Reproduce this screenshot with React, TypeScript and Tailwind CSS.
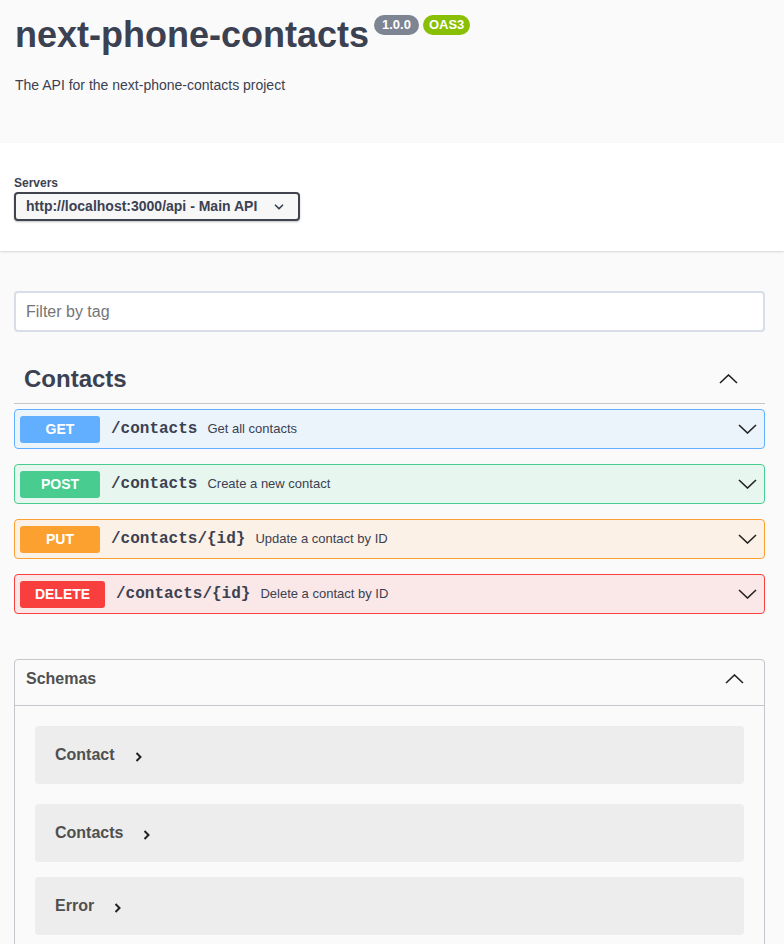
import { ChevronDown } from "lucide-react";

type Op = {
  method: string;
  path: string;
  summary: string;
  badge: string;
  border: string;
  bg: string;
  width: string;
};

const ops: Op[] = [
  { method: "GET", path: "/contacts", summary: "Get all contacts", badge: "bg-[#61affe]", border: "border-[#61affe]", bg: "bg-[#ebf3fb]", width: "w-[80px]" },
  { method: "POST", path: "/contacts", summary: "Create a new contact", badge: "bg-[#49cc90]", border: "border-[#49cc90]", bg: "bg-[#e8f6f0]", width: "w-[80px]" },
  { method: "PUT", path: "/contacts/{id}", summary: "Update a contact by ID", badge: "bg-[#fca130]", border: "border-[#fca130]", bg: "bg-[#fbf1e6]", width: "w-[80px]" },
  { method: "DELETE", path: "/contacts/{id}", summary: "Delete a contact by ID", badge: "bg-[#f93e3e]", border: "border-[#f93e3e]", bg: "bg-[#fae7e7]", width: "w-[85px]" },
];

const schemas = [
  { name: "Contact", mb: "mb-5" },
  { name: "Contacts", mb: "mb-[15px]" },
  { name: "Error", mb: "mb-[15px]" },
];

// swagger-style wide arrows
function ArrowDown() {
  return (
    <svg width="19" height="10" viewBox="0 0 19 10" className="ml-auto shrink-0">
      <polyline points="1,1 9.5,9 18,1" fill="none" stroke="#222" strokeWidth="1.6" />
    </svg>
  );
}

function ArrowUp() {
  return (
    <svg width="19" height="10" viewBox="0 0 19 10" className="ml-auto shrink-0">
      <polyline points="1,9 9.5,1 18,9" fill="none" stroke="#222" strokeWidth="1.6" />
    </svg>
  );
}

function ArrowRight() {
  return (
    <svg width="7" height="10" viewBox="0 0 7 10" className="ml-5 mt-[3px] shrink-0">
      <polyline points="1.5,1 5.5,5 1.5,9" fill="none" stroke="#222" strokeWidth="2" />
    </svg>
  );
}

function OpBlock({ op }: { op: Op }) {
  return (
    <div className={`mb-[15px] flex h-[40px] items-center rounded border ${op.border} ${op.bg} pl-[5px] pr-[7px]`}>
      <span className={`flex h-[27px] ${op.width} items-center justify-center rounded-[3px] ${op.badge} text-[14px] font-bold text-white`}>
        {op.method}
      </span>
      <span className="ml-[11px] font-['Liberation_Mono',monospace] text-[16px] font-semibold text-[#3b4151]">{op.path}</span>
      <span className="ml-[10px] text-[13px] text-[#3b4151]">{op.summary}</span>
      <ArrowDown />
    </div>
  );
}

export default function App() {
  return (
    <div className="min-h-[944px] bg-[#fafafa] font-['Liberation_Sans',Arial,sans-serif] text-[#3b4151]">
      <div className="h-[143px] pl-[15px] pt-[13px]">
        <div className="flex items-start">
          <h2 className="text-[36px] font-bold leading-[44px] text-[#3b4151]">next-phone-contacts</h2>
          <span className="ml-[5px] mt-[2px] flex h-[20px] items-center rounded-full bg-[#7d8492] px-[8px] text-[13px] font-bold text-white">1.0.0</span>
          <span className="ml-[4px] mt-[2px] flex h-[20px] items-center rounded-full bg-[#89bf04] px-[6px] text-[13px] font-bold text-white">OAS3</span>
        </div>
        <p className="mt-[18px] text-[14px]">The API for the next-phone-contacts project</p>
      </div>

      <div className="h-[108px] bg-white pl-[14px] pt-[33px] shadow-[0_1px_2px_0_rgba(0,0,0,0.15)]">
        <div className="text-[12px] font-bold leading-[15px]">Servers</div>
        <div className="mt-[1px] flex h-[29px] w-[286px] items-center rounded border-2 border-[#41444e] bg-[#f7f7f7] pl-[10px] pr-[12px] shadow-[0_1px_2px_0_rgba(0,0,0,0.25)]">
          <span className="text-[14px] font-bold">http://localhost:3000/api - Main API</span>
          <ChevronDown className="ml-auto h-[14px] w-[14px]" strokeWidth={3} />
        </div>
      </div>

      <div className="pl-[14px] pr-[19px] pt-[40px]">
        <div className="flex h-[41px] items-center rounded border-2 border-[#d8dde7] bg-white px-[10px] text-[16px] text-[#757575]">
          Filter by tag
        </div>

        <div className="mt-[20px] flex h-[52px] items-center border-b border-[#c4c6cb] pb-[1px] pl-[10px] pr-[27px] pt-[3px]">
          <h3 className="text-[24px] font-bold">Contacts</h3>
          <ArrowUp />
        </div>

        <div className="mt-[5px]">
          {ops.map((op) => (
            <OpBlock key={op.method} op={op} />
          ))}
        </div>

        <div className="mt-[45px] rounded border border-[#c4c6cb]">
          <div className="flex h-[46px] items-center border-b border-[#c4c6cb] pb-[8px] pl-[11px] pr-[20px]">
            <span className="text-[16px] font-bold text-[#505050]">Schemas</span>
            <ArrowUp />
          </div>
          <div className="px-5 pt-5">
            {schemas.map((s) => (
              <div key={s.name} className={`${s.mb} flex h-[58px] items-center rounded bg-[#ededed] pl-[20px]`}>
                <span className="text-[16px] font-bold text-[#505050]">{s.name}</span>
                <ArrowRight />
              </div>
            ))}
          </div>
        </div>
      </div>
    </div>
  );
}
